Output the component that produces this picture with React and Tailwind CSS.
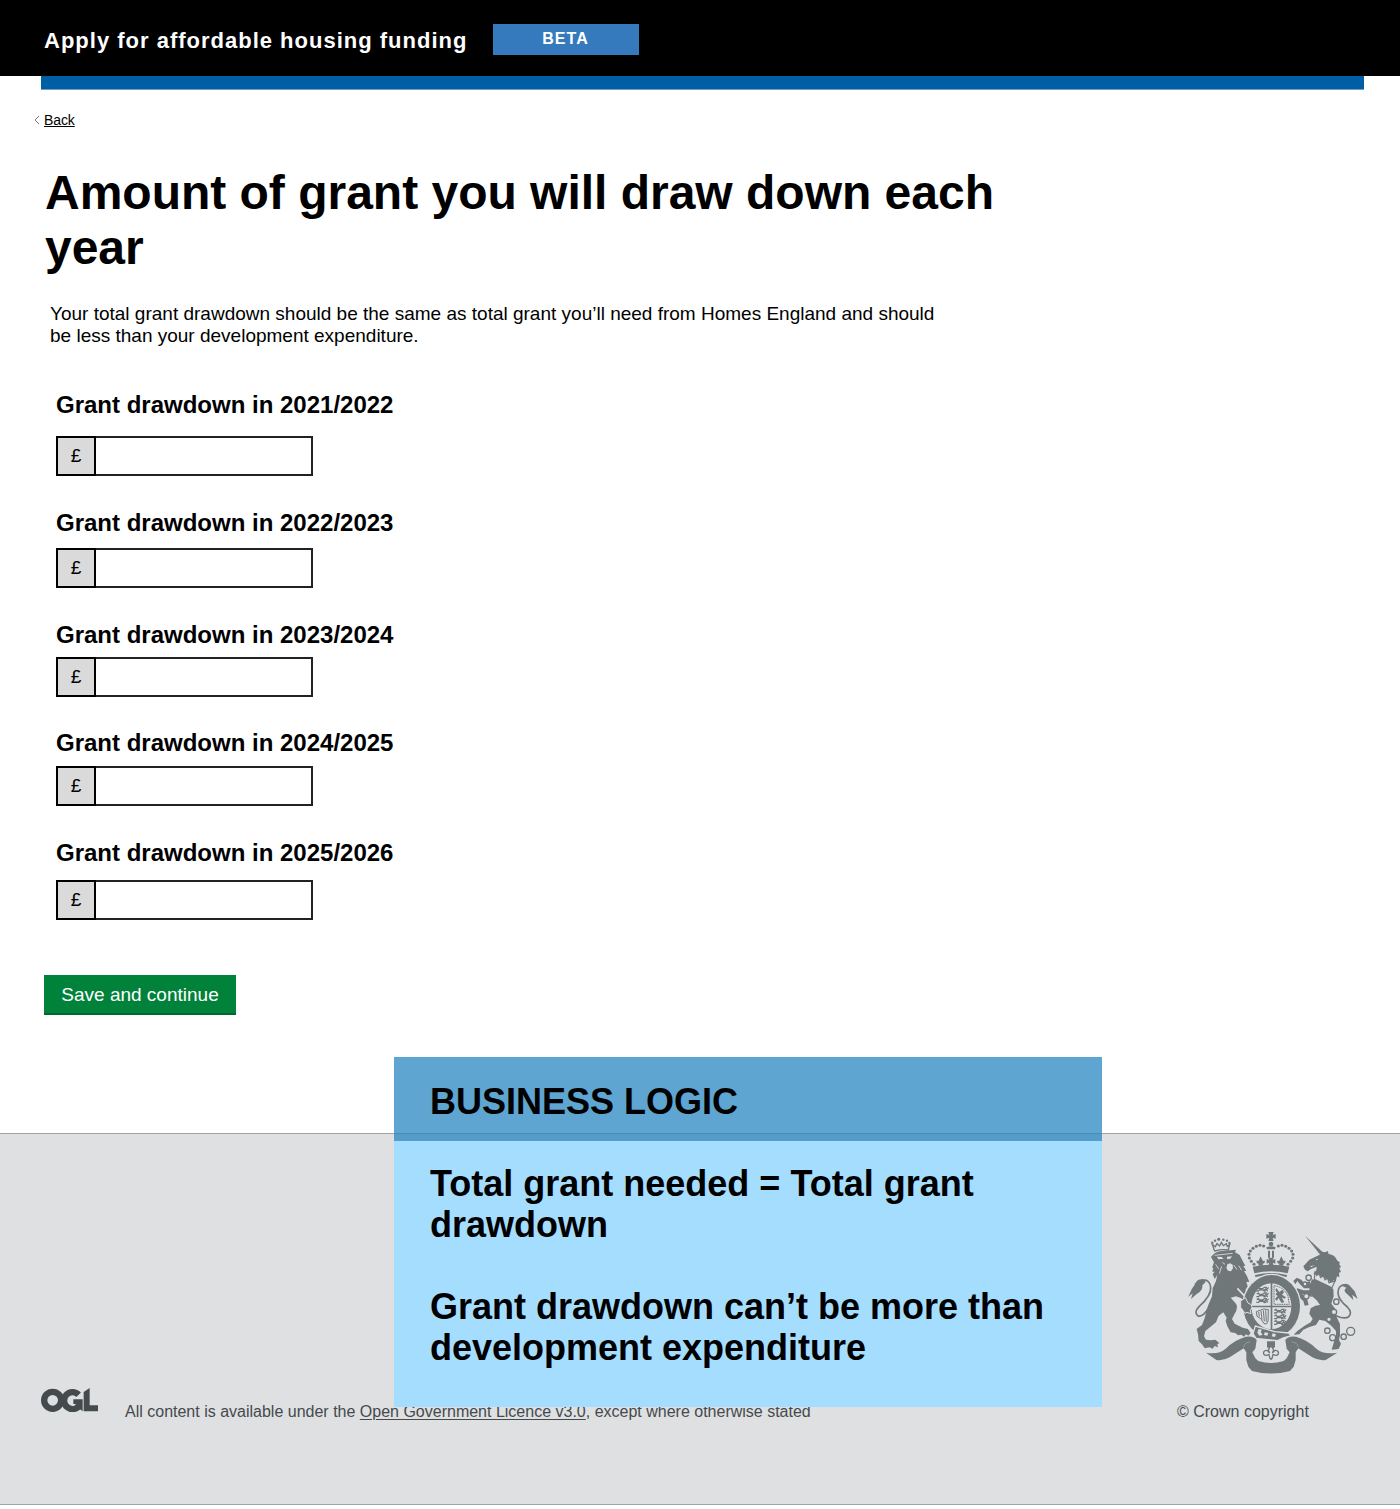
const INK = "#6f7779";
const PAPER = "#dee0e2";

const years = [
  { label: "2021/2022", spacing: "mt-[43px]", gap: "mt-4" },
  { label: "2022/2023", spacing: "mt-8", gap: "mt-[10px]" },
  { label: "2023/2024", spacing: "mt-8", gap: "mt-[7px]" },
  { label: "2024/2025", spacing: "mt-[31px]", gap: "mt-2" },
  { label: "2025/2026", spacing: "mt-8", gap: "mt-3" },
];

function PoundField({ label, spacing, gap }) {
  return (
    <div className={spacing}>
      <label className="block h-[30px] whitespace-nowrap text-2xl leading-[30px] font-bold">
        Grant drawdown in {label}
      </label>
      <div className={`flex h-10 w-[257px] ${gap}`}>
        <span className="flex w-10 items-center justify-center border-2 border-black bg-[#dadada] pb-[2px] text-[19px] leading-none">
          £
        </span>
        <input className="min-w-0 flex-1 border-2 border-l-0 border-[#222] bg-white outline-none" />
      </div>
    </div>
  );
}

function Lions({ x, y }) {
  return (
    <g transform={`translate(${x} ${y})`} fill="none" stroke={INK} strokeWidth="3.8">
      {[0, 17, 34].map((dy) => (
        <path
          key={dy}
          d={`M2 ${dy + 4}l5-3 3 4h10l5-4 6 0-2 6-5 2 6 4M7 ${dy + 13}l4-5 11 1 4 5M36 ${dy + 12}q-5-1-3-5t5-5M1 ${dy + 12}h6`}
        />
      ))}
    </g>
  );
}

function CrownPearls({ points }) {
  return points.map(([x, y]) => <circle key={`${x}-${y}`} cx={x} cy={y} r="4.6" fill={INK} />);
}

function Crest() {
  return (
    <svg viewBox="0 0 555 465" className="h-[155px] w-[185px]" fill={INK} aria-label="Royal coat of arms">
      {/* Crown */}
      <path d="M265 21h16l-3 9 9-3v14l-9-3 3 10h-16l3-10-9 3V27l9 3z" />
      <circle cx="273" cy="57" r="7" />
      <path d="M259 67q14-7 28 0l-2 6h-24zM264 77h6v21h-6zM276 77h6v21h-6z" />
      <CrownPearls
        points={[
          [251, 63], [240, 61], [229, 64], [219, 70], [211, 78], [207, 88], [208, 99], [214, 109], [222, 118],
          [295, 63], [306, 61], [317, 64], [327, 70], [335, 78], [339, 88], [338, 99], [332, 109], [324, 118],
        ]}
      />
      <path d="M265 98h16l-3 7 8-3v14l-8-3 3 9h-16l3-9-8 3v-14l8 3zM242 94l4 9 3 5 6-1-2 8-5 1 1 6h-14l1-6-5-1-2-8 6 1 3-5zM304 94l-4 9-3 5-6-1 2 8 5 1-1 6h14l-1-6 5-1 2-8-6 1-3-5z" />
      <path d="M218 125q55-11 110 0l-5 20q-50-13-100 0zM225 150q48-12 96 0l-1 6q-47-10-94 0z" />

      {/* Lion */}
      <path d="M103 76l-6-18 9 7 5-9 8 7 5-11 6 10 9-6 3 8 7-5-4 16q-21-3-40 3z" fill="none" stroke={INK} strokeWidth="4" />
      <circle cx="97" cy="53" r="3.5" /><circle cx="105" cy="47" r="3.5" /><circle cx="116" cy="43" r="4.5" />
      <circle cx="130" cy="44" r="3.5" /><circle cx="141" cy="47" r="3.5" /><circle cx="148" cy="54" r="3.5" />
      <path d="M93 96Q103 83 119 79L168 74 165 82 179 90 188 108 196 122 190 123 199 138 192 138 201 154 208 170 199 171 203 184 196 196 206 212 212 238 198 232 184 220 168 214 152 218 168 236Q176 250 162 270L156 282 164 296 188 308 204 312 212 324 205 332 198 328 192 335 184 329 174 331 166 324 152 322 142 304 137 288 140 278 130 262 116 272 108 292 88 308 76 318 72 334 78 344 92 346 106 344 118 354 112 358 114 367 104 363 98 371 88 367 74 370 66 358 56 348 54 328 50 312 66 300 74 280 78 262 84 242 96 214 98 190 108 168 112 150 104 162 98 148 104 140 97 140 100 128 96 128 102 112Z" />
      <path d="M111 95l14 1 6 5-16 2zM141 95l15-1-5 7-10 1zM142 118l8-3 8 4 1 11-6 9-9-2-5-8z" fill={PAPER} />
      <path d="M104 91l54-6M127 112l8 6M107 118l9 14M125 124l-7 22M161 120l10 14M176 122l9 14" fill="none" stroke={PAPER} strokeWidth="2.500" />
      <path d="M172 190l34 36" fill="none" stroke={PAPER} strokeWidth="5" />
      <path d="M86 248q-18 31-33 24-12-10 4-27 38-34 35-59-3-24-25-20-12 3-22 12" fill="none" stroke={INK} strokeWidth="5" />
      <path d="M70 163q-19-2-23 12l-12 18-10 22 13-10-5 17 18-16q18-9 16-25l10-10z" />

      {/* Unicorn */}
      <path d="M376 33l54 50-9 7z" />
      <path d="M419 89l7-9 9 2 8-4 3 9q20 3 25 19l10 8-4 2 6 10-5 3 5 12-6 2 1 14-7-3-4 16-7-5-1 11q-28-22-59-30l9-10 1-11-17 7-10 7-8-5-5-10 18-20z" />
      <path d="M407 103l8-2-5 5zM390 124l14-3-11 6z" fill={PAPER} />
      <path d="M396 163Q428 168 460 192L461 214 454 236 466 252 470 276 480 298 480 330 477 345 483 356 476 372 455 374 462 350 468 334 468 318 454 302 436 288 418 284 408 300 388 306 370 314 358 328 341 329 352 318 374 302 392 292 398 282 388 266 392 250 406 242 420 240 410 226 396 214 388 196 390 178Z" />
      <path d="M392 190L372 190 360 178 352 168 346 178 340 168 350 158 364 164 372 174 390 168ZM394 196L370 196 352 190 344 198 356 216 370 228 374 242 386 240 382 224 366 206 378 210 396 216Z" />
      <path d="M405 142l5 9 7-5 5 12 8-6 5 13 8-5 4 13 18-5-9 20-53-25z" fill={PAPER} stroke={INK} strokeWidth="3.500" />
      <path d="M468 272q25 11 37 4 14-12-3-30-27-22-28-42 0-24 20-24" fill="none" stroke={INK} strokeWidth="5" />
      <path d="M482 181q17-10 26 0l16 18 9 23-16-13 3 16-18-17q-15-12-3-20z" />
      <g fill={PAPER} stroke={INK} strokeWidth="4">
        <circle cx="386" cy="158" r="8" /><circle cx="375" cy="177" r="6" /><circle cx="379" cy="214" r="8" />
        <circle cx="469" cy="230" r="8" /><circle cx="462" cy="261" r="8" /><circle cx="447" cy="283" r="7" />
        <circle cx="442" cy="317" r="8" /><circle cx="458" cy="338" r="9" /><circle cx="491" cy="335" r="8" />
        <circle cx="512" cy="319" r="12" />
      </g>

      {/* Garter and quartered shield */}
      <ellipse cx="275" cy="244" rx="89" ry="98" fill={PAPER} />
      <ellipse cx="275" cy="244" rx="85" ry="94" />
      <ellipse cx="274" cy="244" rx="60" ry="69" fill={PAPER} />
      <path d="M272 174h5v140h-5zM214 242h120v5H214z" />
      <Lions x="228" y="186" />
      <Lions x="281" y="252" />
      <path d="M282 182q30 4 42 31l4 25h-46z" fill="none" stroke={INK} strokeWidth="3" strokeDasharray="5 2" />
      <path d="M289 189l9 12 9-7 5 8-6 7 12 8-5 4-8-4 8 15-9 1-8-14-6 8-5-5 8-9-7-5 5-5-5-8z" />
      <path d="M229 260l22-8 14 2-1 35q-3 12-12 7-9-19-21-22zM236 261l2 14M243 258l3 26M250 256l3 33M257 256l2 34" fill="none" stroke={INK} strokeWidth="3" />
      <path d="M226 303l58 17 42 4 8 8-24 7-17 8-65-7-9-14z" stroke={PAPER} strokeWidth="4" />
      <path d="M236 312l10 2-4 7 6 8-10 3-6-9zM254 322l11 2-3 8-10-2zM278 325l10 3-3 8-10-2z" fill={PAPER} />
      <path d="M182 228l14-10 8 16 10 5 2 9-5 8 2 10-12-4-6 3-7-10-6-8z" stroke={PAPER} strokeWidth="3" />

      {/* Pendant */}
      <path d="M261 349h24v18l-12 6-12-6z" />
      <path d="M273 361l8 14-4 9q10-14 18-3 2 10-8 10l-8-2-3 11-3 3-3-3-3-11-8 2q-10 0-8-10 8-11 18 3l-4-9z" fill={PAPER} stroke={INK} strokeWidth="4" />

      {/* Motto ribbon */}
      <path d="M78 383q39 6 59-12 27-27 61-36 24-3 32 10l-4 26-9 11 9 18 9 8q38 12 76 0l9-8 9-18-9-11-4-26q8-13 32-10 34 9 61 36 20 18 63 12l-35 22q-21 3-40-8l-42-27-8 12v23l-6 20-11 13q-57 15-114 0l-11-13-6-20v-23l-8-12-42 27q-19 11-40 8z" />
      <path d="M191 366q4-15 19-15M355 366q-4-15-19-15" fill="none" stroke={PAPER} strokeWidth="1" />
    </svg>
  );
}

function OglLogo() {
  return (
    <svg viewBox="0 0 171 72" className="h-6 w-[57px]" fill="none" stroke="#454b4d" aria-label="Open Government Licence">
      <circle cx="35" cy="37" r="25.500" strokeWidth="19" />
      <path d="M113 20A25.500 25.500 0 1 0 116 52" strokeWidth="19" />
      <path d="M97 34h28v36l-9-7-12 6V48h-7zM128 12l18-12v52h25v18h-43z" fill="#454b4d" stroke="none" />
    </svg>
  );
}

export default function App() {
  return (
    <div className="relative h-[1509px] w-[1400px] overflow-hidden bg-white font-['Liberation_Sans',Arial,sans-serif] text-black">
      <header className="flex h-[76px] items-start bg-black pl-11 text-white">
        <span className="mt-[27px] w-[449px] whitespace-nowrap text-[22px] leading-[28px] font-bold tracking-[1px]">
          Apply for affordable housing funding
        </span>
        <span className="mt-6 flex h-[31px] w-[146px] justify-center bg-[#347abd] pr-px text-base leading-[29px] font-bold tracking-[1px]">
          BETA
        </span>
      </header>
      <div className="ml-[41px] h-[14px] w-[1323px] border-b border-[#6f9fc9] bg-[#005ea5]" />

      <main className="flex h-[1043px] flex-col items-start pl-11">
        <a className="mt-5 -ml-[10px] flex h-5 items-center text-[14px] leading-5">
          <svg viewBox="0 0 6 10" className="mr-1 h-[10px] w-[6px]" fill="none" stroke="#777">
            <path d="M5 1L1 5l4 4" />
          </svg>
          <span className="tracking-[-0.1px] underline underline-offset-1">Back</span>
        </a>

        <h1 className="mt-[35px] ml-px w-[980px] text-[48px] leading-[55px] font-bold tracking-[-0.01px]">
          Amount of grant you will draw down each year
        </h1>

        <p className="mt-[28px] w-[900px] pl-1.5 text-[19px] leading-[22px]">
          Your total grant drawdown should be the same as total grant you’ll need from Homes England and should
          <br />
          be less than your development expenditure.
        </p>

        <form className="ml-3">
          {years.map((year) => (
            <PoundField key={year.label} {...year} />
          ))}
        </form>

        <button className="mt-[55px] h-10 w-48 border-b-2 border-[#00692f] bg-[#00823b] pt-px text-[19px] leading-[37px] text-white">
          Save and continue
        </button>
      </main>

      <footer className="flex h-[372px] items-start border-y border-[#a1a4a6] bg-[#dee0e2] pl-[41px] text-base leading-5 text-[#454a4d]">
        <div className="mt-[254px]">
          <OglLogo />
        </div>
        <p className="mt-[268px] ml-[27px] w-[1052px] whitespace-nowrap">
          All content is available under the{" "}
          <a className="underline underline-offset-2">Open Government Licence v3.0</a>, except where otherwise stated
        </p>
        <div className="flex flex-col">
          <div className="mt-[91px] ml-[3px]">
            <Crest />
          </div>
          <p className="mt-[22px]">© Crown copyright</p>
        </div>
      </footer>

      <aside className="absolute top-[1057px] left-[394px] flex h-[350px] w-[708px] flex-col text-4xl leading-[41px] font-bold">
        <h2 className="h-[84px] bg-[rgba(34,132,192,0.73)] pt-6 pl-9">BUSINESS LOGIC</h2>
        <div className="flex-1 bg-[#a5ddff] pt-[22px] pl-9">
          <p>
            Total grant needed = Total grant
            <br />
            drawdown
          </p>
          <p className="mt-[41px]">
            Grant drawdown can’t be more than
            <br />
            development expenditure
          </p>
        </div>
      </aside>
    </div>
  );
}
